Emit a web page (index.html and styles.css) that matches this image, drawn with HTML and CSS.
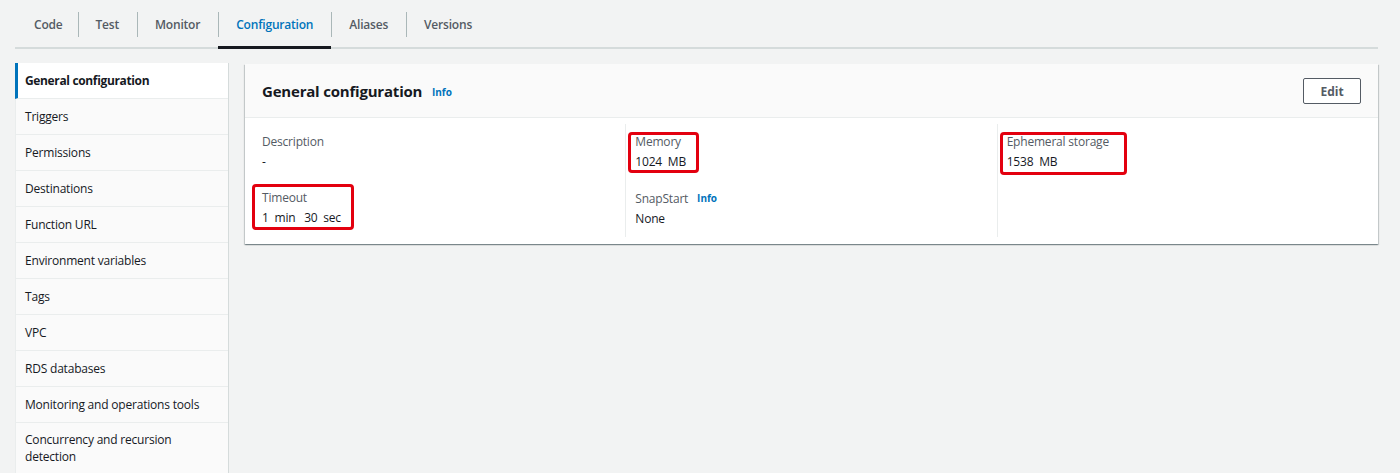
FILE: index.html
```html
<!DOCTYPE html>
<html lang="en">
<head>
<meta charset="UTF-8" />
<title>Lambda configuration</title>
<link rel="stylesheet" href="styles.css">
</head>
<body>

<div class="tabs">
  <div class="tab">Code</div>
  <div class="tab">Test</div>
  <div class="tab">Monitor</div>
  <div class="tab active">Configuration</div>
  <div class="tab">Aliases</div>
  <div class="tab">Versions</div>
</div>

<div class="layout">
  <ul class="side-nav">
    <li class="active">General configuration</li>
    <li>Triggers</li>
    <li>Permissions</li>
    <li>Destinations</li>
    <li>Function URL</li>
    <li>Environment variables</li>
    <li>Tags</li>
    <li>VPC</li>
    <li>RDS databases</li>
    <li>Monitoring and operations tools</li>
    <li>Concurrency and recursion detection</li>
  </ul>

  <div class="main">
    <div class="card">
      <div class="card-header">
        <h2>General configuration <span class="info">Info</span></h2>
        <button class="btn">Edit</button>
      </div>
      <div class="card-body">
        <div class="col">
          <div class="field">
            <div class="label">Description</div>
            <div class="value">-</div>
          </div>
          <div class="field mark mark-timeout">
            <div class="label">Timeout</div>
            <div class="value">1  min   30  sec</div>
          </div>
        </div>
        <div class="col">
          <div class="field mark">
            <div class="label">Memory</div>
            <div class="value">1024  MB</div>
          </div>
          <div class="field">
            <div class="label">SnapStart <span class="info">Info</span></div>
            <div class="value">None</div>
          </div>
        </div>
        <div class="col">
          <div class="field mark mark-storage">
            <div class="label">Ephemeral storage</div>
            <div class="value">1538  MB</div>
          </div>
        </div>
      </div>
    </div>
  </div>
</div>

</body>
</html>
```

FILE: styles.css
```css
body {
  margin: 0;
  font-family: "Open Sans", "Noto Sans", Arial, sans-serif;
  font-size: 12px;
  letter-spacing: -0.2px;
  color: #16191f;
  background: #f2f3f3;
  padding: 0 22px 0 15px;
}

/* top tabs */
.tabs {
  display: flex;
  height: 47px;
  border-bottom: 2px solid #d5dbdb;
  padding-left: 1px;
}

.tab {
  position: relative;
  padding: 3px 18px 0;
  font-weight: 600;
  color: #545b64;
  display: flex;
  align-items: center;
  margin-bottom: -2px;
  border-bottom: 3px solid transparent;
}
.tab:first-child {
  padding-right: 15px;
}
.tab + .tab::before {
  content: "";
  position: absolute;
  left: 0;
  top: 12px;
  height: 25px;
  border-left: 1px solid #aab7b8;
}
.tab.active {
  color: #0073bb;
  border-bottom-color: #16191f;
}

.layout {
  display: flex;
  gap: 16px;
  margin-top: 14px;
  align-items: flex-start;
}

/* left menu */
.side-nav {
  list-style: none;
  margin: 0;
  padding: 0;
  width: 213px;
  flex: none;
  border-right: 1px solid #d5dbdb;
  background: #fafafa;
}
.side-nav li {
  padding: 10px 10px 10px 9px;
  line-height: 15px;
  color: #16191f;
  border-bottom: 1px solid #eaeded;
  border-left: 1px solid #eaeded;
}
.side-nav li:last-child {
  line-height: 17px;
  padding: 8px 40px 9px 9px;
}
.side-nav li.active {
  background: #fff;
  font-weight: 700;
  letter-spacing: -0.35px;
  border-left: 3px solid #0073bb;
  padding-left: 7px;
}

/* card */
.main {
  flex: 1;
  padding-top: 1px;
}

.card {
  background: #fff;
  box-shadow: 0 1px 1px 0 rgba(0, 28, 36, 0.3), 1px 1px 1px 0 rgba(0, 28, 36, 0.15), -1px 1px 1px 0 rgba(0, 28, 36, 0.15);
}

.card-header {
  display: flex;
  align-items: center;
  justify-content: space-between;
  height: 53px;
  padding: 0 17px;
  background: #fafafa;
  border-bottom: 1px solid #eaeded;
}
.card-header h2 {
  margin: 0;
  font-size: 15px;
  font-weight: 700;
  color: #16191f;
}

.info {
  font-size: 10px;
  font-weight: 700;
  letter-spacing: 0;
  color: #0073bb;
  margin-left: 6px;
  vertical-align: 1px;
}

.btn {
  font-family: inherit;
  font-size: 12px;
  font-weight: 700;
  color: #545b64;
  background: #fff;
  border: 1px solid #545b64;
  border-radius: 2px;
  width: 58px;
  height: 26px;
  margin-top: 1px;
}

.card-body {
  display: grid;
  grid-template-columns: 1fr 1fr 1fr;
  padding: 6px 17px 7px;
}

.col {
  display: flex;
  flex-direction: column;
  align-items: flex-start;
  gap: 18px;
  padding: 9px 9px 9px;
}
.col + .col {
  border-left: 1px solid #eaeded;
}
.col:first-child {
  padding-left: 0;
}
.col:nth-child(2) {
  margin-left: -3px;
}
.col:nth-child(3) {
  margin-left: 2px;
}

.field {
  line-height: 18px;
}
.label {
  color: #545b64;
}
.value {
  white-space: pre;
  margin-top: 2px;
}

/* red highlight drawn over screenshot */
.mark {
  position: relative;
}
.mark::after {
  content: "";
  position: absolute;
  top: -1px;
  bottom: -2px;
  left: -7px;
  right: -13px;
  border: 3px solid #e3000f;
  border-radius: 4px;
}
.mark-timeout::after {
  top: -5px;
  left: -10px;
  bottom: -3px;
}
.mark-storage::after {
  right: -18px;
  bottom: -4px;
}
```
